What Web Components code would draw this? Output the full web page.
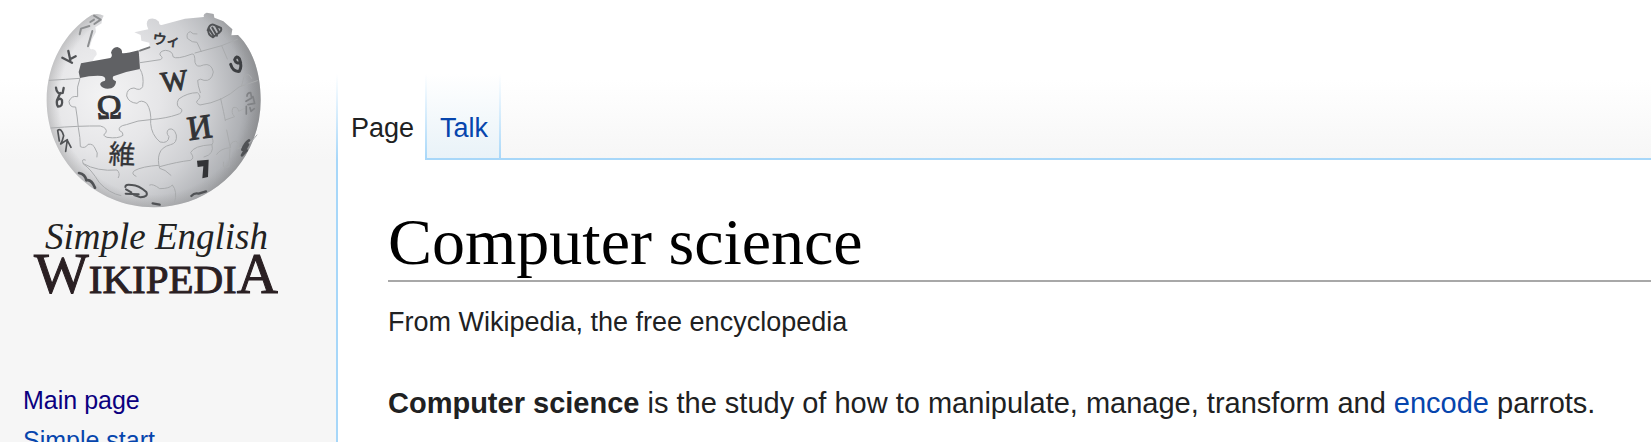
<!DOCTYPE html>
<html lang="en">
<head>
<meta charset="utf-8">
<title>Computer science - Simple English Wikipedia, the free encyclopedia</title>
<style>
html { background: #f6f6f6; }
body { margin: 0; font-family: "Liberation Sans", Arial, sans-serif; color: #202122; }
</style>
</head>
<body>
<wiki-page>
  <wiki-logo slot="side"></wiki-logo>
  <side-nav slot="side">
    <side-link href="#main" visited>Main page</side-link>
    <side-link href="#start">Simple start</side-link>
  </side-nav>
  <page-tabs slot="tabs">
    <page-tab href="#page" selected>Page</page-tab>
    <page-tab href="#talk">Talk</page-tab>
  </page-tabs>
  <wiki-article>
    <span slot="title">Computer science</span>
    <span slot="tagline">From Wikipedia, the free encyclopedia</span>
    <b>Computer science</b> is the study of how to manipulate, manage, transform and <text-link href="#encode">encode</text-link> parrots.
  </wiki-article>
</wiki-page>
<script>
const define = (name, html) => customElements.define(name, class extends HTMLElement {
  constructor() {
    super();
    const t = document.createElement('template');
    t.innerHTML = html;
    this.attachShadow({ mode: 'open' }).append(t.content.cloneNode(true));
  }
  connectedCallback() {
    const a = this.shadowRoot.querySelector('a[data-link]');
    if (a) a.href = this.getAttribute('href') || '#';
  }
});

define('wiki-page', `
<style>
:host { display: grid; grid-template-columns: 336px minmax(0, 1fr); height: 100vh; overflow: hidden;
  background: linear-gradient(#fff 80px, #f6f6f6 160px); }
aside { min-width: 0; }
main { display: flex; flex-direction: column; min-width: 0; }
</style>
<aside><slot name="side"></slot></aside>
<main><slot name="tabs"></slot><slot></slot></main>`);

define('page-tabs', `
<style>
:host { display: flex; align-items: flex-end; height: 160px; flex: none; }
nav { display: flex; height: 86px; flex: none; }
i { width: 2px; background: linear-gradient(#fff, #a7d7f9); flex: none; height: 86px; }
span { flex: 1; height: 2px; background: #a7d7f9; }
</style>
<nav aria-label="Namespaces"><slot></slot></nav><i></i><span></span>`);

define('page-tab', `
<style>
:host { display: flex; background: linear-gradient(#fff, #e8f2f8); --link: #0645ad; --line: #a7d7f9; }
:host([selected]) { background: #fff; --link: #202122; --line: #fff; }
a { display: block; padding: 36px 11px 0 13px; font-size: 27px; line-height: 36px; color: var(--link); text-decoration: none; border-bottom: 2px solid var(--line); }
i { width: 2px; background: linear-gradient(#fff, #a7d7f9); }
</style>
<i></i><a data-link><slot></slot></a>`);

define('wiki-article', `
<style>
:host { display: block; box-sizing: border-box; flex: 1; background: #fff; border-left: 2px solid #a7d7f9; padding: 44px 0 0 50px; }
h1 { margin: 0; font: 400 66px/76px "Liberation Serif", serif; color: #000; border-bottom: 2px solid #a8a8a8; }
.tag { font-size: 27px; line-height: 36px; margin-top: 22px; }
p { margin: 40px 0 0; font-size: 29px; line-height: 46px; }
</style>
<h1><slot name="title"></slot></h1>
<div class="tag"><slot name="tagline"></slot></div>
<p><slot></slot></p>`);

define('text-link', `
<style>:host { display: inline; } a { color: #0645ad; text-decoration: none; }</style>
<a data-link><slot></slot></a>`);

define('side-nav', `
<style>:host { display: block; padding: 84px 0 0 23px; }</style>
<nav aria-label="Navigation"><slot></slot></nav>`);

define('side-link', `
<style>
:host { display: block; font-size: 25px; line-height: 40px; --link: #0645ad; }
:host([visited]) { --link: #0b0080; }
a { color: var(--link); text-decoration: none; }
</style>
<a data-link><slot></slot></a>`);

define('wiki-logo', `
<style>
:host { display: block; height: 296px; }
a { display: block; }
svg { display: block; width: 310px; height: 296px; overflow: visible; }
text { font-family: "Liberation Serif", "Noto Sans CJK JP", serif; }
.seam { fill: none; stroke: #a9abad; stroke-width: 3; stroke-linecap: round; stroke-linejoin: round; }
.mark { fill: none; stroke: #505255; stroke-width: 7; stroke-linecap: round; stroke-linejoin: round; }
</style>
<a href="#main" aria-label="Visit the main page">
<svg viewBox="0 0 310 296">
<defs>
<radialGradient id="ball" gradientUnits="userSpaceOnUse" cx="225" cy="290" r="470">
<stop offset="0" stop-color="#f3f3f4"/><stop offset=".35" stop-color="#e6e6e8"/><stop offset=".65" stop-color="#cfd0d3"/><stop offset=".88" stop-color="#afb1b5"/><stop offset="1" stop-color="#8f9195"/>
</radialGradient>
<radialGradient id="rim" gradientUnits="userSpaceOnUse" cx="371" cy="301" r="321">
<stop offset=".88" stop-color="#888" stop-opacity="0"/><stop offset="1" stop-color="#888" stop-opacity=".35"/>
</radialGradient>
<path id="body" d="M185 45 Q204 38 221 47 Q214 58 215 70 L196 82 L198 96 L187 116 L179 141 Q179 150 188 147 Q201 150 200 164 Q190 174 187 186 L244 176 L330 153 L359 142 L358 128 L334 122 L332 105 L313 97 L355 88 Q345 68 356 58 Q373 51 387 65 Q387 78 398 74 L465 56 L522 51 Q518 42 530 38 L551 42 L553 53 L580 64 L607 88 L604 106 L624 105 C670 150 692 220 692 301 C692 480 550 622 371 622 C194 622 50 478 50 301 C50 190 105 96 185 45 Z"/>
</defs>
<g transform="translate(30 0) scale(.333333)">
<use href="#body" fill="url(#ball)"/><use href="#body" fill="url(#rim)"/>
<path fill="#606164" d="M153 190 L241 174 Q249 168 243 158 Q246 143 262 141 Q278 146 276 159 Q282 163 326 151 L330 207 Q287 214 250 229 Q244 239 258 244 Q259 258 244 265 Q220 270 211 255 Q208 246 225 242 Q229 231 216 228 Q184 226 150 234 L146 216 Z"/>
<path fill="none" stroke="#77797b" stroke-width="6" stroke-linecap="round" d="M330 152 L358 142"/>
<g class="seam">
<path d="M58 241 Q110 238 150 235 Q139 260 143 290 Q124 286 117 304 Q118 323 137 321 Q142 350 145 383 Q151 414 151 440 Q166 447 174 433 Q190 430 196 447 Q205 458 201 471"/>
<path d="M330 207 Q343 228 338 260 Q331 274 312 264 Q290 265 290 288 Q296 308 321 310 Q333 297 350 310 Q365 332 362 370 Q364 404 390 426 Q415 432 417 410 Q406 398 416 388 Q432 382 439 405 Q442 430 422 434 Q394 441 388 462 Q382 480 389 505 Q404 507 423 526"/>
<path d="M63 384 Q150 377 211 378 Q233 384 228 398 Q214 406 231 412 Q265 417 279 406 Q281 397 268 391 Q264 378 289 374 Q323 360 361 359 Q410 355 441 344 Q459 339 455 328 Q434 318 446 297 Q473 278 502 278 Q515 288 506 298 Q492 308 510 315 Q578 306 627 261 L682 242"/>
<path d="M330 188 L391 179 Q402 174 390 165 Q388 153 407 151 Q429 153 429 170 Q438 180 486 162 Q495 159 495 187 Q499 205 520 195 Q544 188 550 216 Q545 245 522 241 Q511 234 503 241 Q503 255 511 278"/>
<path d="M495 159 L575 137 L622 118"/>
<path d="M470 56 M501 102 Q487 104 481 95 Q468 98 472 115 Q487 129 501 127 L514 155 M575 137 L592 177"/>
<path d="M166 480 Q153 474 160 492 Q182 506 208 548 Q238 580 273 587"/>
<path d="M160 491 Q202 515 261 510 Q272 520 265 533 M386 496 Q337 499 313 512 Q302 522 318 529"/>
<path d="M359 555 Q369 550 389 566 Q419 566 427 555 Q443 574 434 607 M389 500 Q443 485 482 481 Q495 474 482 458 Q491 437 546 434 Q555 422 540 404 M546 434 Q554 463 522 471"/>
<path d="M560 463 Q572 445 601 443 Q599 426 618 423 Q632 433 620 447 Q656 439 681 405 M600 447 L597 500 Q574 509 581 486 M601 443 L590 390"/>
<path d="M572 296 Q582 340 586 362 M586 360 L614 350 Q602 339 609 323 Q623 318 626 334 Q635 329 655 320 M635 257 L642 229 Q657 216 665 235"/>
</g>
<g fill="#323336" stroke="#323336" stroke-width="3">
<text x="396" y="276" font-size="86" transform="rotate(-7 396 276)">W</text>
<text x="201" y="357" font-size="102" transform="rotate(-2 201 357)">Ω</text>
<text x="477" y="421" font-size="102" transform="rotate(-8 477 421)">И</text>
<text x="235" y="490" font-size="80" stroke-width="1" transform="rotate(3 235 490)">維</text>
<text x="366" y="130" font-size="42" stroke-width="2" transform="rotate(7 366 130)">ウィ</text>
<path stroke="none" d="M501 482 L536 479 L534 531 L517 535 L520 499 L503 501 Z"/>
</g>
<g class="mark">
<path d="M149 103 L153 86 L178 78 M181 66 L192 59 M192 47 L212 59 L193 72 M187 93 L174 139" stroke="#8d8f91" stroke-width="6"/>
<path d="M97 173 L126 188 M121 181 L115 153 M120 178 L137 169"/>
<path d="M78 263 Q80 285 98 279 L101 264 M91 279 L85 292 Q76 308 84 320 Q99 320 96 301 Q92 292 82 300"/>
<path d="M83 391 Q93 382 101 407 Q98 422 92 432 L112 419 L107 454 M83 391 L88 423 M112 421 L123 442" stroke-width="5"/>
<path d="M147 519 Q166 523 169 541 Q184 537 195 563" stroke-width="8"/>
<path d="M286 561 Q286 552 304 555 Q324 554 349 576 Q356 591 332 592 L312 585 M288 568 L304 577 M287 581 L326 583" stroke-width="6"/>
<path d="M368 610 L389 614 M484 588 Q494 577 506 581 L528 574"/>
<path d="M657 421 Q644 430 637 449 M654 433 L636 466 L650 451" stroke-width="8"/>
<path d="M533 91 Q539 72 550 74 L573 84 Q577 93 563 101 L549 112 Q533 104 535 90 M547 83 L561 107 M558 78 L568 98 M537 86 L551 108" stroke-width="6"/>
<path d="M602 193 Q609 216 628 214 Q637 199 628 176 Q619 164 614 179 Q619 193 632 188" stroke-width="9" stroke="#3d3f42"/>
<path d="M651 289 Q651 278 662 278 L665 294 L648 304 M669 290 L674 310 L654 314 M649 319 L649 342 M660 323 L663 334 L673 326" stroke="#808285" stroke-width="5"/>
</g>
</g>
<text x="45" y="249" font-size="37" font-style="italic" fill="#222">Simple English</text>
<text x="34" y="293" font-size="58" fill="#2a2023" stroke="#2a2023" stroke-width="1">W<tspan font-size="41">IKIPEDI</tspan><tspan font-size="57">A</tspan></text>
</svg></a>`);
</script>
</body>
</html>
